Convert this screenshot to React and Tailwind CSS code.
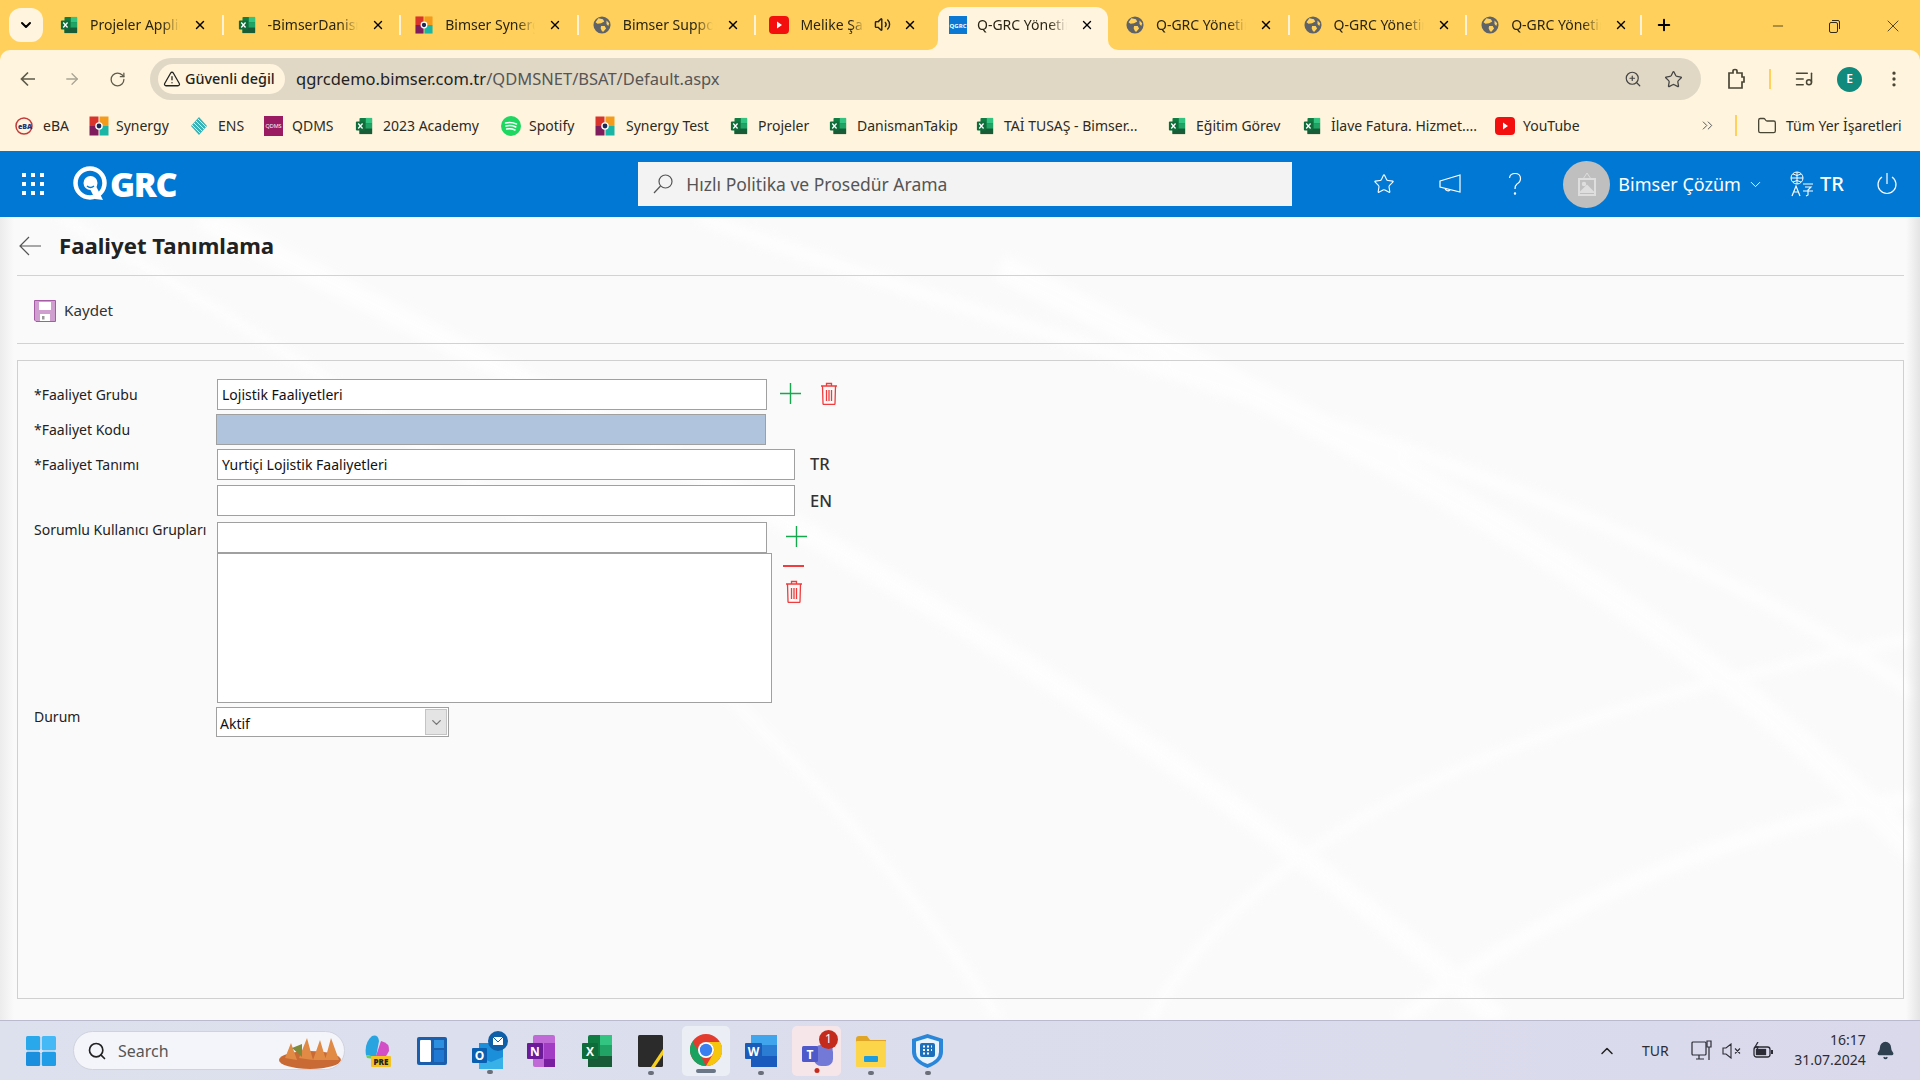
import React from "react";
import { ArrowRight, RotateCw, ZoomIn, Star, ListMusic, Minus, Plus, X, ChevronDown, ChevronUp, ChevronsRight, Folder, Search, Bell, Volume2, TriangleAlert, EllipsisVertical } from "lucide-react";

const Excel = ({ s = 18 }) => (
  <svg width={s} height={s} viewBox="0 0 20 20" className="shrink-0">
    <rect x="5" y="1" width="14" height="18" rx="1" fill="#107c41" />
    <rect x="12" y="1" width="7" height="6" fill="#33c481" />
    <rect x="12" y="7" width="7" height="6" fill="#21a366" />
    <rect x="5" y="13" width="14" height="6" fill="#185c37" />
    <rect x="1" y="5" width="10" height="10" rx="1" fill="#0f6c3a" />
    <path d="M3.6 7.2 L8.4 12.8 M8.4 7.2 L3.6 12.8" stroke="#fff" strokeWidth="1.4" />
  </svg>
);
const Syn = ({ s = 20 }) => (
  <svg width={s} height={s} viewBox="0 0 20 20" className="shrink-0">
    <rect x="0.5" y="0.5" width="9" height="9.5" fill="#d9342b" />
    <rect x="10.5" y="0.5" width="9" height="9.5" fill="#f59b1c" />
    <rect x="0.5" y="10" width="9" height="9.5" fill="#7f1d5c" />
    <rect x="10.5" y="10" width="9" height="9.5" fill="#1bb5a6" />
    <circle cx="10" cy="10" r="3.8" fill="#fff" />
    <circle cx="10" cy="10" r="2.4" fill="#1e2a55" />
  </svg>
);
const Globe = () => (
  <svg width="18" height="18" viewBox="0 0 20 20" className="shrink-0">
    <circle cx="10" cy="10" r="9.5" fill="#5f6368" />
    <path d="M6 2.5 L11 3.5 L12.5 6 L9 8 L5 8.5 L2.8 7 Z M9 11 L13 11 L14.5 14 L11.5 17.5 L10 17 L8.5 13.5 Z M15 5 L18 8 L17 11 L15 9 Z" fill="#ffd15c" />
  </svg>
);
const Yt = () => (
  <svg width="20" height="18" viewBox="0 0 20 18" className="shrink-0">
    <rect x="0" y="0" width="20" height="18" rx="4" fill="#f40f0f" />
    <path d="M8 5.5 L13 9 L8 12.5 Z" fill="#fff" />
  </svg>
);
const QG = () => (
  <svg width="18" height="18" viewBox="0 0 18 18" className="shrink-0">
    <rect width="18" height="18" fill="#0b78d4" />
    <text x="9" y="11.5" textAnchor="middle" fontSize="6" fontWeight="700" fill="#fff" fontFamily="Open Sans">QGRC</text>
  </svg>
);

const Tab = ({ icon, text, w = "w-[177.6px]", tw = "w-[90px]", sound, sep = true }) => (
  <div className={`${w} h-[36px] shrink-0 flex items-center relative`}>
    <div className="ml-[14px] w-[18px] flex justify-center">{icon}</div>
    <div className={`ml-[12px] ${tw} h-[20px] overflow-hidden whitespace-nowrap text-[14px] leading-[20px] text-[#2a2413] [mask-image:linear-gradient(to_right,black_80%,transparent)]`}>{text}</div>
    {sound ? <Volume2 size={17} className="absolute left-[118px] top-[9px] text-[#222]" /> : null}
    <X size={14} strokeWidth={2.4} className="absolute left-[147px] top-[11px] text-black" />
    {sep ? <div className="absolute right-0 top-[8px] w-[2px] h-[20px] bg-[#fff2d6]" /> : null}
  </div>
);

const Chrome = () => (
  <div className="h-[50px] bg-[#ffd15c] flex items-end shrink-0 relative">
    <div className="absolute left-[9px] top-[8px] w-[34px] h-[34px] rounded-[12px] bg-[#fff4de] flex items-center justify-center">
      <ChevronDown size={16} strokeWidth={3} className="text-black" />
    </div>
    <div className="ml-[46px] h-[50px] flex items-start pt-[7px]">
      <Tab icon={<Excel />} text="Projeler Application" />
      <Tab icon={<Excel />} text="-BimserDanismanlik" />
      <Tab icon={<Syn s={18} />} text="Bimser Synergy" />
      <Tab icon={<Globe />} text="Bimser Support" />
      <Tab icon={<Yt />} text="Melike Şahin" tw="w-[64px]" sound sep={false} />
      <div className="w-[170px] ml-[4px] mr-[4px] h-[43px] bg-[#fff4de] rounded-t-[12px] flex items-center relative shrink-0 pb-[7px]">
        <div className="absolute -left-[10px] bottom-0 w-[10px] h-[10px] bg-[#fff4de]"><div className="w-full h-full bg-[#ffd15c] rounded-br-[10px]" /></div>
        <div className="absolute -right-[10px] bottom-0 w-[10px] h-[10px] bg-[#fff4de]"><div className="w-full h-full bg-[#ffd15c] rounded-bl-[10px]" /></div>
        <div className="ml-[11px]"><QG /></div>
        <div className="ml-[10px] w-[90px] h-[20px] overflow-hidden whitespace-nowrap text-[14px] leading-[20px] text-[#2a2413] [mask-image:linear-gradient(to_right,black_80%,transparent)]">Q-GRC Yönetim</div>
        <X size={14} strokeWidth={2.4} className="absolute left-[142px] top-[11px] text-black" />
      </div>
      <Tab icon={<Globe />} text="Q-GRC Yönetim" />
      <Tab icon={<Globe />} text="Q-GRC Yönetim" />
      <Tab icon={<Globe />} w="w-[175px]" text="Q-GRC Yönetim" />
      <Plus size={18} strokeWidth={2.6} className="ml-[13px] mt-[9px] text-black" />
    </div>
    <div className="absolute right-[17px] top-[16px] flex items-center gap-[41px] text-[#332b15]">
      <Minus size={16} strokeWidth={1.2} />
      <svg width="15" height="15" viewBox="0 0 15 15" fill="none" stroke="currentColor"><rect x="2.5" y="3.5" width="8" height="10" rx="1.5" /><path d="M5 1.5 H11 Q12.5 1.5 12.5 3 V10" /></svg>
      <X size={20} strokeWidth={1} />
    </div>
  </div>
);

const Toolbar = () => (
  <div className="h-[50px] bg-[#fff4de] rounded-t-[10px] flex items-center shrink-0 relative pt-[8px]">
    <svg width="18" height="18" viewBox="0 0 18 18" fill="none" stroke="#5f5a4a" strokeWidth="1.7" className="ml-[19px]"><path d="M16 9 H2.5 M9 2.5 L2.5 9 L9 15.5" /></svg>
    <ArrowRight size={18} strokeWidth={1.7} className="ml-[26px] text-[#a8a393]" />
    <RotateCw size={17} strokeWidth={1.8} className="ml-[28px] text-[#5f5a4a]" />
    <div className="ml-[24px] w-[1551px] h-[42px] rounded-full bg-[#e0d8c5] flex items-center pl-[8px]">
      <div className="w-[127px] h-[30px] rounded-full bg-[#fff4de] flex items-center pl-[5px] gap-[4px]">
        <TriangleAlert size={18} strokeWidth={1.7} className="text-[#222]" />
        <span className="text-[14.4px] font-medium text-[#222] whitespace-nowrap">Güvenli değil</span>
      </div>
      <div className="ml-[11px] text-[16.5px] text-[#555] whitespace-nowrap"><span className="text-[#222]">qgrcdemo.bimser.com.tr</span>/QDMSNET/BSAT/Default.aspx</div>
      <ZoomIn size={18} strokeWidth={1.6} className="ml-auto text-[#444]" />
      <Star size={19} strokeWidth={1.6} className="ml-[22px] mr-[18px] text-[#444]" />
    </div>
    <svg width="20" height="22" viewBox="0 0 20 22" fill="none" stroke="#4a4636" strokeWidth="1.7" className="ml-[25px]"><path d="M3 5 H7 V3 Q7 1.5 9 1.5 Q11 1.5 11 3 V5 H16 V9 H18 V14 H16 V20 H3 Z" /></svg>
    <div className="ml-[23px] w-[2px] h-[20px] bg-[#ffd15c]" />
    <ListMusic size={20} strokeWidth={1.8} className="ml-[23px] text-[#4a4636]" />
    <div className="ml-[23px] w-[25px] h-[25px] rounded-full bg-[#0f8a7d] flex items-center justify-center text-white text-[12px] font-semibold">E</div>
    <EllipsisVertical size={20} className="ml-[22px] text-[#4a4636]" />
  </div>
);

const Bm = ({ icon, text, w, g = "gap-[10px]" }) => (
  <div className={`${w} ${g} shrink-0 flex items-center whitespace-nowrap text-[14px] text-[#2e2a1e]`}>
    {icon}<span>{text}</span>
  </div>
);

const Bookmarks = () => (
  <div className="h-[51px] bg-[#fff4de] flex items-center pl-[15px] shrink-0 relative">
    <Bm w="w-[74px]" text="eBA" icon={
      <svg width="18" height="18" viewBox="0 0 18 18" className="shrink-0"><circle cx="9" cy="9" r="8" fill="none" stroke="#c23a3a" strokeWidth="1.5" /><text x="10" y="12" textAnchor="middle" fontSize="7" fontWeight="800" fill="#1d3a78" fontFamily="Open Sans">eBA</text></svg>} />
    <Bm w="w-[101px]" text="Synergy" g="gap-[7px]" icon={<Syn />} />
    <Bm w="w-[74px]" text="ENS" icon={
      <svg width="18" height="20" viewBox="0 0 18 20" className="shrink-0"><path d="M9 1 L17 10 L9 19 L1 10 Z" fill="#38b3b8" /><path d="M4 7 L12 15 M6 5 L14 13 M8 3 L16 11 M2 9 L10 17" stroke="#fff4de" strokeWidth="0.9" /></svg>} />
    <Bm w="w-[91px]" text="QDMS" g="gap-[9px]" icon={
      <svg width="19" height="20" viewBox="0 0 19 20" className="shrink-0"><rect width="19" height="20" fill="#9b1b62" /><text x="9.5" y="12" textAnchor="middle" fontSize="5.5" fill="#fff" fontFamily="Open Sans">QDMS</text></svg>} />
    <Bm w="w-[146px]" text="2023 Academy" icon={<Excel />} />
    <Bm w="w-[94px]" text="Spotify" g="gap-[8px]" icon={
      <svg width="20" height="20" viewBox="0 0 20 20" className="shrink-0"><circle cx="10" cy="10" r="10" fill="#1ed760" /><path d="M4.5 7 Q10 5.5 15.5 8 M5 10 Q10 8.8 14.8 11 M5.6 13 Q10 12 14 14" stroke="#fff" strokeWidth="1.5" fill="none" strokeLinecap="round" /></svg>} />
    <Bm w="w-[135px]" text="Synergy Test" g="gap-[11px]" icon={<Syn />} />
    <Bm w="w-[99px]" text="Projeler" icon={<Excel />} />
    <Bm w="w-[147px]" text="DanismanTakip" icon={<Excel />} />
    <Bm w="w-[192px]" text="TAİ TUSAŞ - Bimser..." icon={<Excel />} />
    <Bm w="w-[135px]" text="Eğitim Görev" icon={<Excel />} />
    <Bm w="w-[192px]" text="İlave Fatura. Hizmet...." icon={<Excel />} />
    <Bm w="w-[100px]" text="YouTube" g="gap-[8px]" icon={<Yt />} />
    <ChevronsRight size={17} strokeWidth={1.4} className="ml-[104px] text-[#555]" />
    <div className="ml-[19px] w-[2px] h-[21px] bg-[#ffd15c]" />
    <Folder size={20} strokeWidth={1.6} className="ml-[20px] text-[#4a4636]" />
    <span className="ml-[9px] text-[14px] text-[#2e2a1e] whitespace-nowrap">Tüm Yer İşaretleri</span>
  </div>
);

const Header = () => (
  <div className="h-[66px] bg-[#0078d4] flex items-center shrink-0 text-white relative">
    <div className="ml-[22px] grid grid-cols-3 gap-[5px] w-[22px]">
      {Array.from({ length: 9 }).map((_, i) => <div key={i} className="w-[4px] h-[4px] bg-white" />)}
    </div>
    <svg width="36" height="36" viewBox="0 0 36 36" fill="none" className="ml-[29px]">
      <circle cx="17" cy="17" r="14.5" stroke="#fff" strokeWidth="4.5" />
      <circle cx="17.5" cy="17" r="7" fill="#fff" />
      <path d="M17 23 L23 20 L30 34 L22 33 Z" fill="#fff" />
      <path d="M14 20 Q17.5 23 21 20" stroke="#0078d4" strokeWidth="1.5" />
    </svg>
    <span className="ml-[1px] text-[34px] leading-none font-extrabold tracking-[-1.3px] font-['Open_Sans',sans-serif]">GRC</span>
    <div className="ml-[462px] w-[654px] h-[44px] bg-[#f3f3f3] flex items-center pl-[14px]">
      <svg width="22" height="22" viewBox="0 0 22 22" fill="none" stroke="#555" strokeWidth="1.2"><circle cx="13.5" cy="8.5" r="6.5" /><path d="M8.5 13 L2 20" /></svg>
      <span className="ml-[12px] text-[17.5px] text-[#555] whitespace-nowrap">Hızlı Politika ve Prosedür Arama</span>
    </div>
    <Star size={22} strokeWidth={1.2} className="ml-[81px]" />
    <svg width="24" height="24" viewBox="0 0 24 24" fill="none" stroke="#fff" strokeWidth="1.2" className="ml-[43px]"><path d="M2 9 L22 3 V20 L2 15 Z M7 16 A3 3 0 0 0 12 18" /></svg>
    <svg width="18" height="24" viewBox="0 0 18 24" fill="none" stroke="#fff" strokeWidth="1.2" className="ml-[44px]"><path d="M3.5 6 Q4 1.5 9 1.5 Q14.5 1.5 14.5 6.5 Q14.5 10 11 12 Q9 13.5 9 17" /><circle cx="9" cy="21.5" r="0.6" /></svg>
    <div className="ml-[39px] w-[47px] h-[47px] rounded-full bg-[#bfbfbf] flex items-center justify-center">
      <svg width="20" height="24" viewBox="0 0 20 24" fill="none" stroke="#dedede" strokeWidth="2"><rect x="2" y="7" width="16" height="16" /><path d="M10 1 L6 7 M10 1 L14 7" strokeWidth="1" /><circle cx="7" cy="12" r="1.2" fill="#dedede" /><path d="M4 20 L10 14 L16 20 Z" fill="#dedede" /></svg>
    </div>
    <span className="ml-[8px] text-[18px] whitespace-nowrap">Bimser Çözüm</span>
    <ChevronDown size={17} strokeWidth={1.3} className="ml-[6px]" />
    <svg width="24" height="26" viewBox="0 0 24 26" fill="none" stroke="#fff" strokeWidth="1" className="ml-[26px]"><circle cx="7" cy="7" r="6" /><path d="M1 7 H13 M7 1 V13 M3 3 Q7 6 11 3 M3 11 Q7 8 11 11" /><path d="M2 25 L6 15 L10 25 M3.5 21 H8.5" strokeWidth="1.2" /><path d="M13 13 H23 M15 16 H21 L18 19 V24 L16 25 M13 20 H23" strokeWidth="1.1" /></svg>
    <span className="ml-[6px] text-[20px] font-medium">TR</span>
    <svg width="22" height="24" viewBox="0 0 22 24" fill="none" stroke="#fff" strokeWidth="1.2" className="ml-[32px]"><path d="M11 1 V12 M6 5 A9 9 0 1 0 16 5" /></svg>
  </div>
);

const Trash = () => (
  <svg width="18" height="23" viewBox="0 0 18 23" fill="none" stroke="#f03c3c" strokeWidth="1.3">
    <path d="M1 4 H17 M6.5 4 V1.5 H11.5 V4 M2.5 4 L3 21.5 Q3 22.5 4 22.5 H14 Q15 22.5 15 21.5 L15.5 4" />
    <path d="M6.5 8 V19 M9 8 V19 M11.5 8 V19" strokeWidth="1.3" />
  </svg>
);
const GreenPlus = () => (
  <svg width="21" height="21" viewBox="0 0 21 21" stroke="#16a84f" strokeWidth="1.4"><path d="M10.5 0 V21 M0 10.5 H21" /></svg>
);

const Label = ({ children, cls = "" }) => (
  <div className={`w-[183px] shrink-0 text-[14px] leading-[20px] text-[#222] whitespace-nowrap ${cls}`}>{children}</div>
);
const Input = ({ w, value = "", cls = "bg-white" }) => (
  <div className={`${w} ${cls} h-[31px] border border-[#a0a0a0] pl-[4px] flex items-center text-[14px] text-[#111] whitespace-nowrap`}>{value}</div>
);

const Main = () => (
  <div className="flex-1 relative bg-[#fafafa] overflow-hidden flex flex-col">
    <svg className="absolute inset-0 w-full h-full opacity-70 blur-[5px]" viewBox="0 0 1920 803" fill="none" stroke="#ffffff" preserveAspectRatio="none">
      <path d="M200 0 C 700 250, 1100 450, 1500 803" strokeWidth="22" />
      <path d="M60 0 C 500 250, 800 500, 1000 803" strokeWidth="10" />
      <path d="M1000 50 C 1300 200, 1650 350, 1920 640" strokeWidth="26" />
      <path d="M700 0 C 1100 150, 1600 250, 1920 480" strokeWidth="14" />
      <path d="M1400 803 C 1600 650, 1800 600, 1920 580" strokeWidth="16" />
      <path d="M1150 803 C 1250 620, 1500 500, 1920 420" strokeWidth="10" />
    </svg>
    <div className="absolute left-0 top-0 bottom-0 w-[14px] bg-gradient-to-r from-[#ececec] to-transparent" />
    <div className="absolute right-0 top-0 bottom-0 w-[14px] bg-gradient-to-l from-[#e4e4e4] to-transparent" />
    <div className="relative flex flex-col flex-1 pl-[17px] pr-[16px] pb-[21px]">
      <div className="h-[59px] border-b border-[#d2d2d2] flex items-center shrink-0">
        <svg width="24" height="20" viewBox="0 0 24 20" fill="none" stroke="#555" strokeWidth="1.2" className="ml-[1px]"><path d="M23 10 H2 M11 1 L2 10 L11 19" /></svg>
        <span className="ml-[17px] text-[22.2px] font-bold text-[#222] whitespace-nowrap">Faaliyet Tanımlama</span>
      </div>
      <div className="h-[68px] border-b border-[#d2d2d2] flex items-center shrink-0 pt-[2px]">
        <svg width="22" height="22" viewBox="0 0 22 22" className="ml-[17px]"><path d="M0.5 0.5 H21.5 V21.5 H2 L0.5 20 Z" fill="#cf9fcf" stroke="#a45ca4" /><rect x="5" y="2" width="12" height="8" fill="#fff" /><rect x="6" y="14" width="10" height="7" fill="#fff" /><rect x="8" y="16" width="2.5" height="3.5" fill="#999" /></svg>
        <span className="ml-[8px] text-[15.2px] text-[#333]">Kaydet</span>
      </div>
      <div className="mt-[16px] flex-1 border border-[#d0d0d0] pl-[16px] pt-[18px] flex flex-col">
        <div className="flex items-start">
          <Label cls="mt-[6px]">*Faaliyet Grubu</Label>
          <Input w="w-[550px]" value="Lojistik Faaliyetleri" />
          <div className="ml-[13px] mt-[4px]"><GreenPlus /></div>
          <div className="ml-[19px] mt-[3px]"><Trash /></div>
        </div>
        <div className="flex items-start mt-[4px]">
          <Label cls="mt-[6px]">*Faaliyet Kodu</Label>
          <div className="-ml-[1px] w-[550px] h-[31px] bg-[#b0c4de] border border-[#a0a0a0]" />
        </div>
        <div className="flex items-start mt-[4px]">
          <Label cls="mt-[6px]">*Faaliyet Tanımı</Label>
          <Input w="w-[578px]" value="Yurtiçi Lojistik Faaliyetleri" />
          <span className="ml-[15px] mt-[3px] text-[16.5px] font-medium text-[#333]">TR</span>
        </div>
        <div className="flex items-start mt-[5px]">
          <Label />
          <Input w="w-[578px]" />
          <span className="ml-[15px] mt-[4px] text-[16.5px] font-medium text-[#333]">EN</span>
        </div>
        <div className="flex items-start mt-[6px]">
          <Label cls="-mt-[2px]">Sorumlu Kullanıcı Grupları</Label>
          <div className="flex flex-col">
            <Input w="w-[550px]" />
            <div className="w-[555px] h-[150px] bg-white border border-[#a0a0a0]" />
          </div>
          <div className="flex flex-col items-start">
            <div className="ml-[14px] mt-[4px]"><GreenPlus /></div>
            <div className="ml-[11px] mt-[18px] w-[21px] h-[2px] bg-[#f03c3c]" />
            <div className="ml-[13px] mt-[13px]"><Trash /></div>
          </div>
        </div>
        <div className="flex items-start mt-[4px]">
          <Label>Durum</Label>
          <div className="-ml-[1px] w-[233px] h-[30px] bg-white border border-[#a0a0a0] flex items-center pl-[3px] pt-[2px] text-[14px] text-[#111] relative">
            Aktif
            <div className="absolute right-[1px] top-[1px] bottom-[1px] w-[22px] bg-[#e4e4e4] border border-[#c4c4c4] flex items-center justify-center">
              <ChevronDown size={15} strokeWidth={2.2} className="text-[#777]" />
            </div>
          </div>
        </div>
      </div>
    </div>
  </div>
);

const Ind = ({ b = "-bottom-[8px]" }) => <div className={`absolute left-1/2 -translate-x-1/2 ${b} w-[6px] h-[4px] rounded-full bg-[#6b6f7a]`} />;

const Taskbar = () => (
  <div className="h-[60px] border-t border-[#b9bace] flex items-center shrink-0 relative bg-gradient-to-r from-[#dde1ee] to-[#d9d9eb]">
    <svg width="30" height="30" viewBox="0 0 30 30" className="ml-[26px] shrink-0">
      <rect x="0" y="0" width="14.2" height="14.2" rx="1.5" fill="#29a8ec" />
      <rect x="15.8" y="0" width="14.2" height="14.2" rx="1.5" fill="#45b9f5" />
      <rect x="0" y="15.8" width="14.2" height="14.2" rx="1.5" fill="#1a8fdd" />
      <rect x="15.8" y="15.8" width="14.2" height="14.2" rx="1.5" fill="#1f9de6" />
    </svg>
    <div className="ml-[17px] w-[272px] h-[39px] rounded-full bg-[#f4f5fa] border border-[#d0d2de] flex items-center pl-[13px] relative overflow-hidden shrink-0">
      <Search size={20} strokeWidth={2} className="text-[#222]" />
      <span className="ml-[11px] text-[16px] text-[#555]">Search</span>
      <svg width="66" height="38" viewBox="0 0 66 38" className="absolute right-[1px] top-0">
        <ellipse cx="33" cy="28" rx="31" ry="9" fill="#c96a35" />
        <path d="M8 26 L14 11 L20 28 Z M22 26 L30 6 L36 28 Z M36 28 L43 8 L49 28 Z M48 28 L54 6 L62 28 Z" fill="#e08a45" />
        <path d="M15 16 L25 12 L25 25 Z" fill="#7d8a3a" />
      </svg>
    </div>
    <div className="ml-[17px] shrink-0">
      <svg width="30" height="32" viewBox="0 0 30 32">
        <path d="M10 1 Q16 -1 17 6 L14 22 L4 20 Q2 8 10 1 Z" fill="#2aa4e0" />
        <path d="M4 20 L14 22 L12 24 L5 23 Z" fill="#6fcf5a" />
        <path d="M19 6 Q28 8 27 16 L23 23 L14 21 Z" fill="#d24fc5" />
        <rect x="9" y="21" width="20" height="11" rx="1" fill="#f6c221" />
        <text x="19" y="30" textAnchor="middle" fontSize="8" fontWeight="800" fill="#222" fontFamily="Open Sans">PRE</text>
      </svg>
    </div>
    <div className="ml-[25px] shrink-0">
      <svg width="30" height="28" viewBox="0 0 30 28"><rect width="30" height="28" rx="2" fill="#1b5eab" /><rect x="3" y="3" width="11" height="22" rx="1" fill="#fff" /><rect x="17" y="3" width="10" height="8" fill="#2d8fe0" /><rect x="17" y="13" width="10" height="12" fill="#1f78d1" /></svg>
    </div>
    <div className="ml-[23px] shrink-0 relative w-[40px]">
      <svg width="40" height="40" viewBox="0 0 40 40"><rect x="9" y="12" width="24" height="24" fill="#1b8fd9" /><path d="M9 26 L21 31 L33 26 V38 H9 Z" fill="#37b1e8" /><rect x="2" y="17" width="15" height="15" rx="1" fill="#0a5fb0" /><text x="9.5" y="29" textAnchor="middle" fontSize="12" fontWeight="700" fill="#fff" fontFamily="Open Sans">O</text><circle cx="28" cy="10" r="10" fill="#0f5ea8" /><rect x="23" y="6" width="10" height="8" fill="#fff" /><path d="M23 6 L28 11 L33 6" stroke="#0f5ea8" fill="none" /></svg>
      <Ind b="-bottom-[3px]" />
    </div>
    <div className="ml-[17px] shrink-0">
      <svg width="30" height="32" viewBox="0 0 30 32"><rect x="6" y="0" width="22" height="32" rx="2" fill="#c06ad8" /><rect x="17" y="8" width="11" height="16" fill="#a33cc4" /><rect x="17" y="24" width="11" height="8" fill="#7a1fa0" /><rect x="0" y="8" width="16" height="16" rx="1" fill="#6b1a98" /><text x="8" y="21" textAnchor="middle" fontSize="12" fontWeight="700" fill="#fff" fontFamily="Open Sans">N</text></svg>
    </div>
    <div className="ml-[25px] shrink-0">
      <svg width="30" height="32" viewBox="0 0 30 32"><rect x="6" y="0" width="24" height="32" rx="2" fill="#107c41" /><rect x="18" y="0" width="12" height="10" fill="#33c481" /><rect x="18" y="10" width="12" height="11" fill="#21a366" /><rect x="6" y="21" width="24" height="11" fill="#185c37" /><rect x="0" y="8" width="16" height="16" rx="1" fill="#0f6c3a" /><text x="8" y="21" textAnchor="middle" fontSize="12" fontWeight="700" fill="#fff" fontFamily="Open Sans">X</text></svg>
    </div>
    <div className="ml-[26px] shrink-0 relative">
      <svg width="25" height="32" viewBox="0 0 25 32"><rect width="25" height="32" rx="1.5" fill="#2b2b2b" /><path d="M25 14 L25 20 L17 32 L13 32 Z" fill="#f7d020" /></svg>
      <Ind />
    </div>
    <div className="ml-[19px] w-[48px] h-[50px] rounded-[5px] bg-[#eceef5] flex items-center justify-center relative shrink-0">
      <svg width="32" height="32" viewBox="0 0 32 32" className="mb-[2px]"><circle cx="16" cy="16" r="16" fill="#e33b2e" /><path d="M2.5 7.5 L10 20 L16 32 A16 16 0 0 1 2.5 7.5 Z" fill="#1aa260" /><path d="M16 32 L23 20 A8 8 0 0 0 16 8 H30 A16 16 0 0 1 16 32 Z" fill="#f6c50e" /><circle cx="16" cy="16" r="8" fill="#fff" /><circle cx="16" cy="16" r="6.2" fill="#3a7ff0" /></svg>
      <div className="absolute left-1/2 -translate-x-1/2 bottom-[3px] w-[20px] h-[4px] rounded-full bg-[#6b7686]" />
    </div>
    <div className="ml-[15px] shrink-0 relative">
      <svg width="32" height="32" viewBox="0 0 32 32"><rect x="6" y="0" width="26" height="32" rx="2" fill="#2b7cd3" /><rect x="6" y="0" width="26" height="10" fill="#41a5ee" /><rect x="6" y="21" width="26" height="11" fill="#185abd" /><rect x="0" y="8" width="17" height="16" rx="1" fill="#1a5cb8" /><text x="8.5" y="21" textAnchor="middle" fontSize="12" fontWeight="700" fill="#fff" fontFamily="Open Sans">W</text></svg>
      <Ind />
    </div>
    <div className="ml-[15px] w-[49px] h-[50px] rounded-[5px] bg-[#f6e6ea] flex items-center justify-center relative shrink-0">
      <svg width="32" height="32" viewBox="0 0 32 32"><circle cx="25" cy="13" r="6.5" fill="#5b62c4" /><rect x="13" y="10" width="19" height="21" rx="7" fill="#7279d6" /><rect x="1" y="11" width="16" height="16" rx="1.5" fill="#5059c9" /><text x="9" y="24" textAnchor="middle" fontSize="12" fontWeight="700" fill="#fff" fontFamily="Open Sans">T</text></svg>
      <div className="absolute top-[4px] right-[3px] w-[19px] h-[19px] rounded-full bg-[#c42b1c] text-white text-[12px] flex items-center justify-center">1</div>
      <div className="absolute left-1/2 -translate-x-1/2 bottom-[3px] w-[5px] h-[5px] rounded-full bg-[#c42b1c]" />
    </div>
    <div className="ml-[15px] shrink-0 relative">
      <svg width="30" height="32" viewBox="0 0 30 32"><path d="M0 4 Q0 1 3 1 H11 L14 5 H30 V10 H0 Z" fill="#e0a526" /><rect x="0" y="6" width="30" height="26" rx="1" fill="#fdd54a" /><rect x="8" y="21" width="14" height="6" rx="1" fill="#1d9be0" /></svg>
      <Ind />
    </div>
    <div className="ml-[26px] shrink-0 relative">
      <svg width="31" height="34" viewBox="0 0 31 34"><path d="M15.5 0 L31 5 V18 Q31 28 15.5 34 Q0 28 0 18 V5 Z" fill="#2a86d8" /><path d="M15.5 4 L27 7.5 V18 Q27 26 15.5 30 Q4 26 4 18 V7.5 Z" fill="#eaf2fb" /><rect x="8" y="9" width="15" height="14" rx="2" fill="#1c6fb8" /><path d="M11 12.5 h2 M15 12.5 h2 M19 12.5 h1 M11 16 h2 M15 16 h2 M19 16 h1 M11 19.5 h2 M15 19.5 h2" stroke="#fff" strokeWidth="2" /></svg>
      <Ind b="-bottom-[7px]" />
    </div>
    <ChevronUp size={20} strokeWidth={1.8} className="ml-[654px] text-[#222]" />
    <span className="ml-[25px] text-[14px] text-[#2c2c36]">TUR</span>
    <svg width="22" height="22" viewBox="0 0 22 22" fill="none" stroke="#2c2c36" strokeWidth="1.2" className="ml-[22px]"><rect x="1" y="2" width="14" height="13" rx="1" /><path d="M5 19 H13 M8 15 V19 M16 1 H20 V7 H16 Z M18 7 V20" /></svg>
    <svg width="20" height="16" viewBox="0 0 20 16" fill="none" stroke="#2c2c36" strokeWidth="1.1" className="ml-[9px]"><path d="M1 5 H4 L9 1 V15 L4 11 H1 Z M13 5.5 L18 10.5 M18 5.5 L13 10.5" /></svg>
    <svg width="22" height="18" viewBox="0 0 22 18" fill="none" stroke="#2c2c36" strokeWidth="1.3" className="ml-[10px]"><rect x="2" y="5" width="16" height="10" rx="2.5" /><rect x="4.5" y="7.5" width="9" height="5" fill="#2c2c36" /><path d="M20 8 V12" strokeWidth="2" /><path d="M6 0 L3 5 H6 L5 8" /></svg>
    <div className="ml-[14px] w-[78px] text-right text-[14px] leading-[20px] text-[#2c2c36] -mt-[2px]">
      <div>16:17</div>
      <div className="whitespace-nowrap">31.07.2024</div>
    </div>
    <Bell size={19} fill="#2f4150" className="ml-[10px] text-[#2f4150]" />
  </div>
);

export default function App() {
  return (
    <div className="w-[1920px] h-[1080px] flex flex-col overflow-hidden bg-[#ffd15c] font-['Noto_Sans',sans-serif]">
      <Chrome />
      <Toolbar />
      <Bookmarks />
      <Header />
      <Main />
      <Taskbar />
    </div>
  );
}
